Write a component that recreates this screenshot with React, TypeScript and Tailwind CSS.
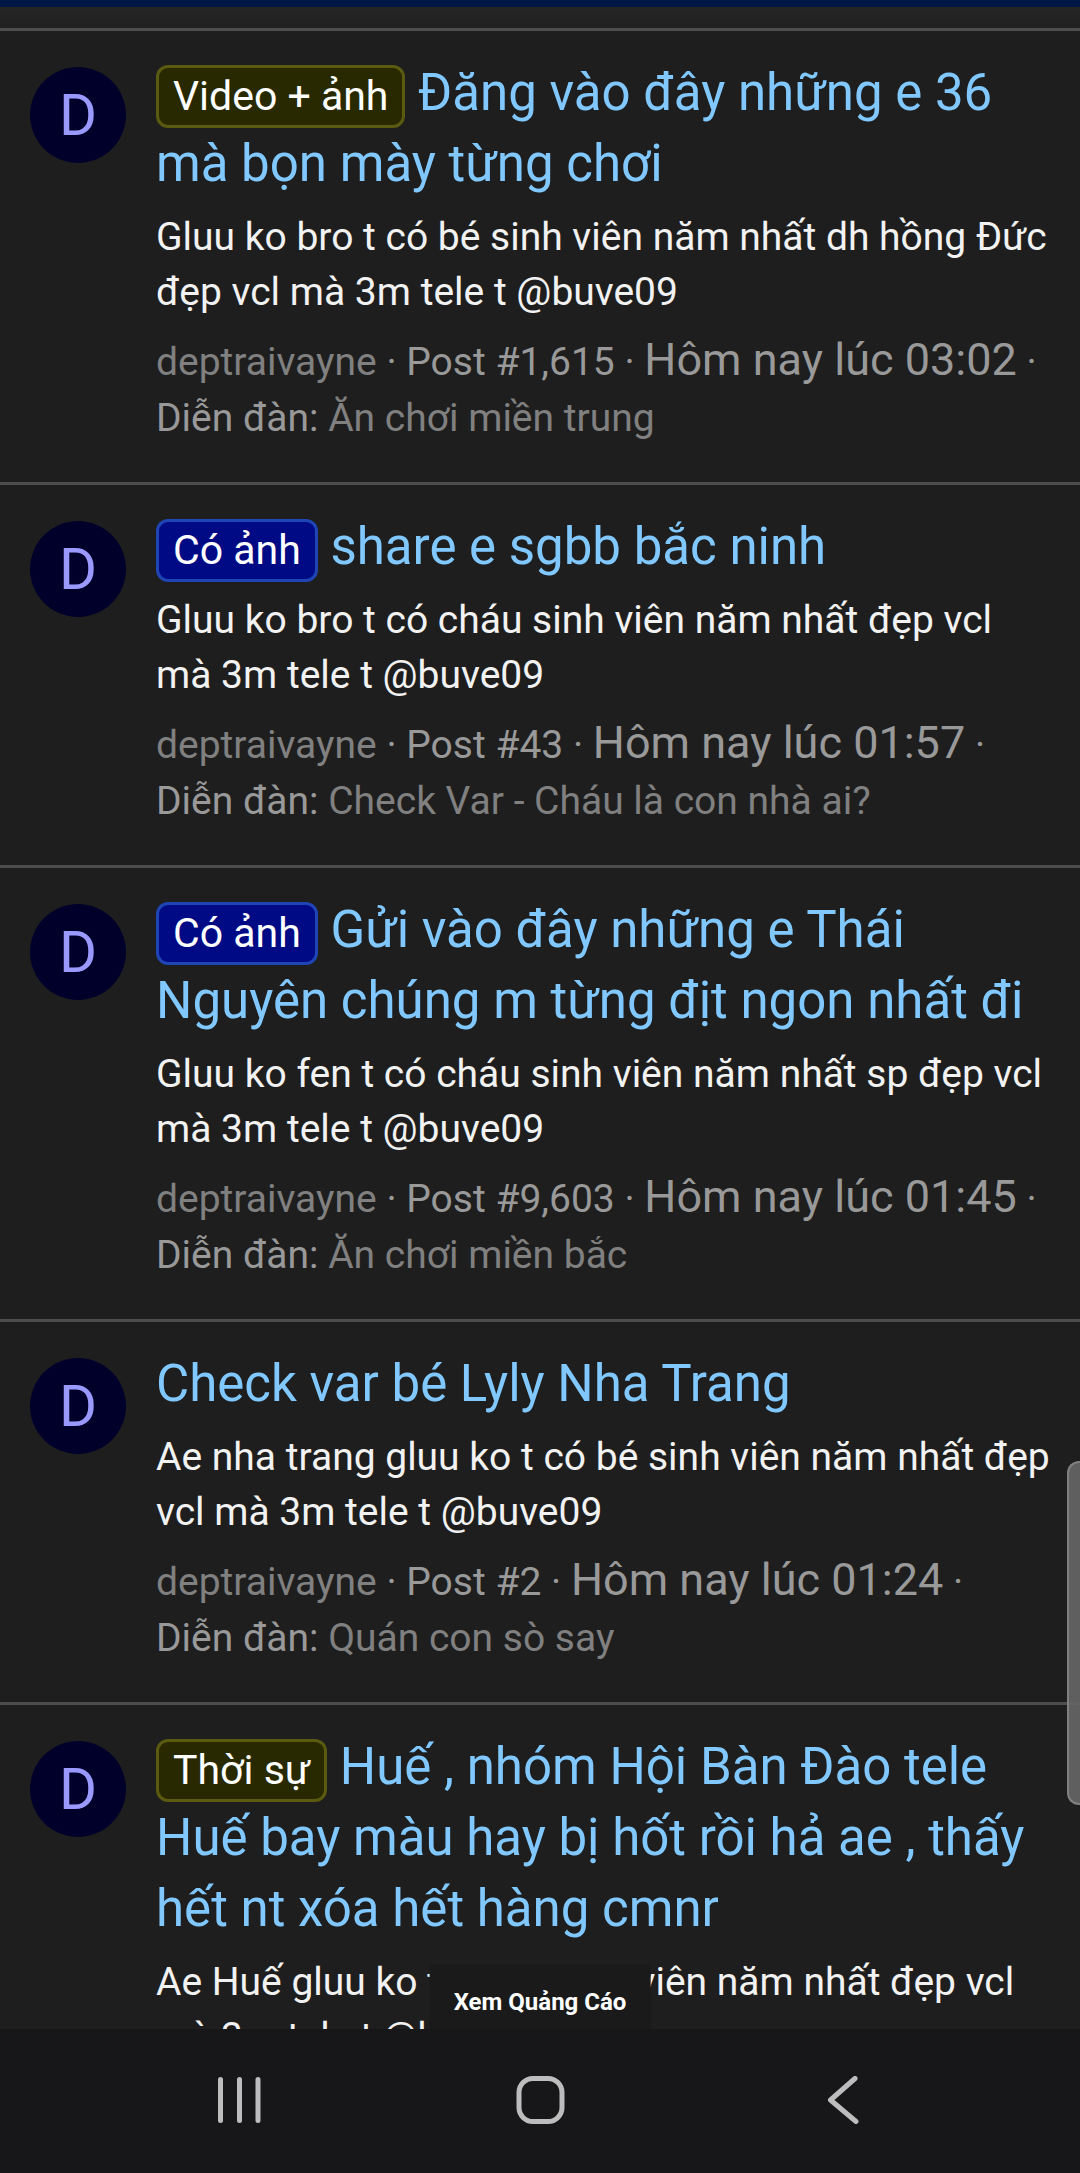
import { Fragment } from "react";

type Post = {
  label?: { text: string; tone: "olive" | "blue" };
  title: string;
  snippet: string;
  number: string;
  time: string;
  forum?: string;
};

const author = "deptraivayne";

const posts: Post[] = [
  {
    label: { text: "Video + ảnh", tone: "olive" },
    title: "Đăng vào đây những e 36 mà bọn mày từng chơi",
    snippet:
      "Gluu ko bro t có bé sinh viên năm nhất dh hồng Đức đẹp vcl mà 3m tele t @buve09",
    number: "#1,615",
    time: "03:02",
    forum: "Ăn chơi miền trung",
  },
  {
    label: { text: "Có ảnh", tone: "blue" },
    title: "share e sgbb bắc ninh",
    snippet:
      "Gluu ko bro t có cháu sinh viên năm nhất đẹp vcl mà 3m tele t @buve09",
    number: "#43",
    time: "01:57",
    forum: "Check Var - Cháu là con nhà ai?",
  },
  {
    label: { text: "Có ảnh", tone: "blue" },
    title: "Gửi vào đây những e Thái Nguyên chúng m từng địt ngon nhất đi",
    snippet:
      "Gluu ko fen t có cháu sinh viên năm nhất sp đẹp vcl mà 3m tele t @buve09",
    number: "#9,603",
    time: "01:45",
    forum: "Ăn chơi miền bắc",
  },
  {
    title: "Check var bé Lyly Nha Trang",
    snippet:
      "Ae nha trang gluu ko t có bé sinh viên năm nhất đẹp vcl mà 3m tele t @buve09",
    number: "#2",
    time: "01:24",
    forum: "Quán con sò say",
  },
  {
    label: { text: "Thời sự", tone: "olive" },
    title:
      "Huế , nhóm Hội Bàn Đào tele Huế bay màu hay bị hốt rồi hả ae , thấy hết nt xóa hết hàng cmnr",
    snippet: "Ae Huế gluu ko t có bé sinh viên năm nhất đẹp vcl mà 3m tele t @buve09",
    number: "",
    time: "",
  },
];

const tones = {
  olive: "border-[#5a5a10] bg-[#292900]",
  blue: "border-[#1f45b5] bg-[#000a85]",
};

function PostRow({ post }: { post: Post }) {
  return (
    <li className="flex gap-[30px] border-t-[3px] border-[#4d4d4d] px-[30px] py-9">
      <a
        href="#"
        className="flex size-24 shrink-0 items-center justify-center rounded-full bg-[#00002b] text-[58px] leading-none text-[#9999ff]"
      >
        D
      </a>
      <div className="min-w-0 flex-1">
        <h3 className="-mt-2.5 text-[51px] leading-[71px] text-[#80c8ff]">
          <a href="#">
            {post.label && (
              <Fragment>
                <span
                  className={`inline-block rounded-xl border-[3px] px-3.5 text-[41px] leading-[57px] text-white ${tones[post.label.tone]}`}
                >
                  {post.label.text}
                </span>{" "}
              </Fragment>
            )}
            {post.title}
          </a>
        </h3>
        <p className="mt-[11px] text-[39px] leading-[55px] text-[#f2f2f2]">
          {post.snippet}
        </p>
        {post.forum && (
          <div className="mt-3 text-[39px] leading-[56px] text-[#999999]">
            <a href="#" className="text-[#808080]">
              {author}
            </a>
            {" · "}Post {post.number}
            {" · "}
            <time className="text-[45px]">Hôm nay lúc {post.time}</time>
            {" · "}
            <span className="inline-block">
              Diễn đàn:{" "}
              <a href="#" className="text-[#808080]">
                {post.forum}
              </a>
            </span>
          </div>
        )}
      </div>
    </li>
  );
}

function NavBar() {
  return (
    <nav className="grid h-36 shrink-0 grid-cols-3 bg-[#17171a] px-[88px] pb-0.5 text-[#bdbdbd]">
      <button aria-label="Recent apps" className="flex items-center justify-center">
        <svg width="48" height="48" viewBox="0 0 48 48" stroke="currentColor" strokeWidth="5" strokeLinecap="round">
          <path d="M5.5 3.5v41M24.5 3.5v41M43 3.5v41" />
        </svg>
      </button>
      <button aria-label="Home" className="flex items-center justify-center">
        <svg width="50" height="50" viewBox="0 0 50 50" fill="none" stroke="currentColor" strokeWidth="5">
          <rect x="4" y="3.5" width="43" height="43" rx="14" />
        </svg>
      </button>
      <button aria-label="Back" className="flex items-center justify-center">
        <svg width="48" height="48" viewBox="0 0 48 48" fill="none" stroke="currentColor" strokeWidth="5" strokeLinecap="round" strokeLinejoin="round">
          <path d="M38 2.5L13.500 24L39 45.500" />
        </svg>
      </button>
    </nav>
  );
}

export default function App() {
  return (
    <div className="flex h-screen flex-col bg-[#1e1e1e] font-['Roboto',sans-serif]">
      <header className="h-[7px] shrink-0 bg-[#001644]" />
      <main className="relative min-h-0 flex-1 overflow-hidden">
        <div className="h-[21px] bg-linear-to-b from-[#262626] to-[#202020]" />
        <ul>
          {posts.map((post) => (
            <PostRow key={post.title} post={post} />
          ))}
        </ul>
        <div className="absolute top-[71.9%] right-0 h-[17%] w-[13px] rounded-l-xl border-y-2 border-l-2 border-[#808080] bg-[#666666]/90" />
        <button className="absolute bottom-0 left-1/2 h-[65px] -translate-x-1/2 bg-[#1a1a1a] px-6 pt-2.5 text-2xl font-bold whitespace-nowrap text-white">
          Xem Quảng Cáo
        </button>
      </main>
      <NavBar />
    </div>
  );
}
